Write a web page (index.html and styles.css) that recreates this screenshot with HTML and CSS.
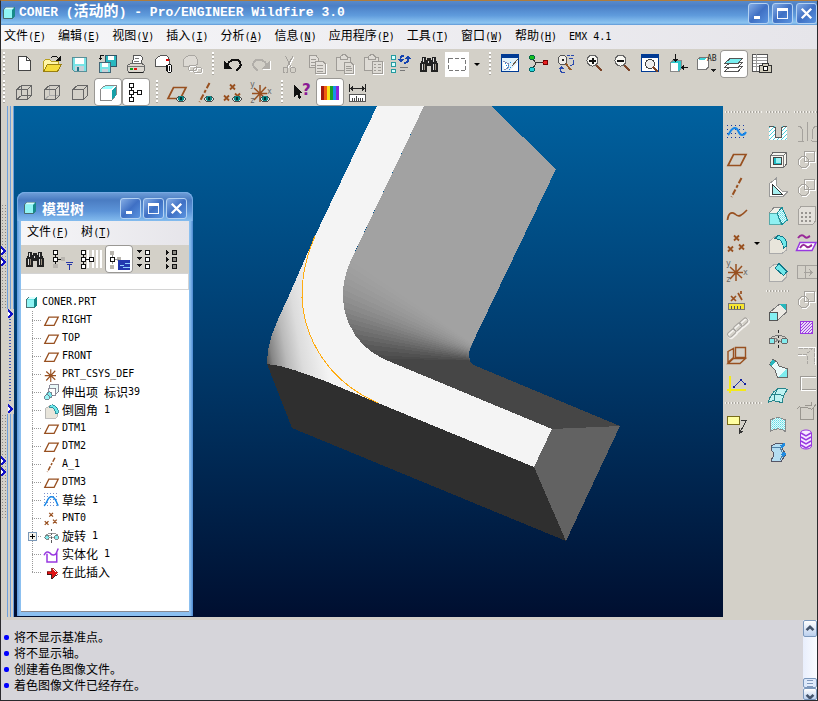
FILE: index.html
```html
<!DOCTYPE html>
<html lang="zh-CN">
<head>
<meta charset="utf-8">
<meta name="viewport" content="width=device-width, initial-scale=1">
<title>CONER (活动的) - Pro/ENGINEER Wildfire 3.0</title>
<link rel="stylesheet" href="styles.css">
</head>
<body>
<svg class="defs" aria-hidden="true">
<defs>
<pattern id="hatch" width="4" height="4" patternUnits="userSpaceOnUse"><rect width="4" height="4" fill="#fff"/><path d="M-1 1 1-1M0 4 4 0M3 5 5 3" stroke="#4fd0dc"/></pattern>
<pattern id="phatch" width="3" height="3" patternUnits="userSpaceOnUse"><rect width="3" height="3" fill="#e9dcf8"/><path d="M0 3 3 0" stroke="#a040e0"/></pattern>
<pattern id="dots" width="4" height="4" patternUnits="userSpaceOnUse"><rect width="1" height="1" fill="#1237a0"/></pattern>
<pattern id="tint" width="2" height="2" patternUnits="userSpaceOnUse"><rect width="2" height="2" fill="#e8f8fa"/><rect width="1" height="1" fill="#5cdce4"/><rect x="1" y="1" width="1" height="1" fill="#8ceaf0"/></pattern>
</defs>
<symbol id="part" viewBox="0 0 14 14"><path d="M1.500 3.500 4 1.500H12.500V10L10.500 12.500H1.500Z" fill="#66e6e6" stroke="#4a6a6c"/><path d="M2 4H10V12H2Z" fill="#8ff4f4"/><path d="M10 4 13 1V10L10 13Z" fill="#168a8a"/><path d="M2 3.500 4 1.500H12L10 3.500Z" fill="#d8ffff"/></symbol>
<symbol id="new" viewBox="0 0 28 28"><path d="M8.500 6.500H16.500L20.500 10.500V20.500H8.500Z" fill="#fff" stroke="#444"/><path d="M16.500 6.500V10.500H20.500" fill="none" stroke="#444"/></symbol>
<symbol id="open" viewBox="0 0 28 28"><path d="M5.500 21.500V11.500L7.500 9.500H11.500L13.500 11.500H20.500V14" fill="#fff6a8" stroke="#b8a020"/><path d="M5.500 21.500 9.500 14.500H23.500L19.500 21.500Z" fill="#f5dc3c" stroke="#9a8010"/><path d="M13 8C15 5.500 19 5.500 21 9" fill="none" stroke="#111"/><path d="M18 10.500H23V6Z" fill="#111"/></symbol>
<symbol id="save" viewBox="0 0 28 28"><path d="M6.500 7.500H20.500V21.500H8.500L6.500 19.500Z" fill="#78e4e6" stroke="#5a8f98"/><path d="M9 8H18V14H9Z" fill="#fff"/><path d="M9 16H18V21H9Z" fill="#c8d0d8"/><path d="M11 17H13V21H11Z" fill="#278"/></symbol>
<symbol id="savecopy" viewBox="0 0 28 28"><path d="M11.500 5.500H22.500V16.500H11.500Z" fill="#28b8c0" stroke="#356"/><path d="M14 6H20V10H14Z" fill="#fff"/><path d="M5.500 12.500H16.500V22.500H5.500Z" fill="#78e4e6" stroke="#467"/><path d="M8 13H14V17H8Z" fill="#fff"/><path d="M8 19H14V22H8Z" fill="#c8d0d8"/><path d="M10 5.500H6.500V9" fill="none" stroke="#111"/><path d="M4 7.500H9L6.500 10.500Z" fill="#111"/></symbol>
<symbol id="print" viewBox="0 0 28 28"><path d="M10 14 12 5.500H18.500L20.500 7.500 19 14Z" fill="#fff" stroke="#555"/><path d="M12.500 8.500H17M12 11.500H17" stroke="#777"/><path d="M5.500 15.500 8.500 13.500H20L22.500 15.500V20.500L21 22.500H7L5.500 20.500Z" fill="#dcd8d0" stroke="#666"/><path d="M6 16.500H22" stroke="#777"/><path d="M8 18H11V20H8Z" fill="#18a020"/><path d="M12 18H15V20H12Z" fill="#e01818"/><path d="M7 22.500H21" stroke="#222"/></symbol>
<symbol id="mail" viewBox="0 0 28 28"><path d="M5.500 16.500V11C6 7 9 6 12 5.500H15.500C18 6 19 8 19.500 10V16.500Z" fill="#fff" stroke="#555"/><path d="M16 9H19V11H16Z" fill="#d00"/><rect x="17.500" y="14.500" width="4" height="8" rx="2" fill="#fff" stroke="#111"/><path d="M19.500 16V21M16.500 15V21" stroke="#111"/></symbol>
<symbol id="maillink" viewBox="0 0 28 28"><path d="M5.500 16.500V11C6 7 9 6 12 5.500H15.500C18 6 19 8 19.500 10V14.500L12 16.500Z" fill="#dddad4" stroke="#aaa7a2"/><g fill="none" stroke="#fff"><rect x="11.500" y="16.500" width="8" height="5" rx="2"/><rect x="16.500" y="18.500" width="8" height="5" rx="2"/></g><g fill="none" stroke="#aaa7a2"><rect x="10.500" y="15.500" width="8" height="5" rx="2"/><rect x="15.500" y="17.500" width="8" height="5" rx="2"/></g></symbol>
<symbol id="undo" viewBox="0 0 28 28"><path d="M8 16C10 9 18 8 21 12C23 16 20 19 17 20.500" fill="none" stroke="#111" stroke-width="2"/><path d="M5 10V19H13Z" fill="#111"/></symbol>
<symbol id="redo" viewBox="0 0 28 28"><path d="M20 16C18 9 10 8 7 12C5 16 8 19 11 20.500" fill="none" stroke="#b1aea9" stroke-width="2"/><path d="M23 10V19H15Z" fill="#b1aea9"/><path d="M16 19.500H24M23.500 11V19" fill="none" stroke="#fff"/></symbol>
<symbol id="cut" viewBox="0 0 28 28"><g fill="none" stroke="#fff"><path d="M11 7 17 18M19 7 13 18"/></g><g fill="none" stroke="#a5a29d"><path d="M10.500 6 16 17M18 6 12 17"/><ellipse cx="10.500" cy="20" rx="2.500" ry="3"/><ellipse cx="18" cy="20" rx="2.500" ry="3"/></g></symbol>
<symbol id="copy" viewBox="0 0 28 28"><g fill="#e2dfda" stroke="#9f9c97"><path d="M6.500 5.500H13L15.500 8.500V17.500H6.500Z"/><path d="M12.500 11.500H20L22.500 14V23H12.500Z"/><path d="M8 9.500H13M8 12.500H12M8 15.500H12M14 15.500H20M14 18.500H20M14 21H20"/></g><path d="M23.500 14V24H13" fill="none" stroke="#fff"/></symbol>
<symbol id="paste" viewBox="0 0 28 28"><g fill="#dedbd5" stroke="#9f9c97"><path d="M5.500 7.500H19.500V20.500H5.500Z"/><path d="M9.500 9.500V6.500L12 4.500H14L16 6.500V9.500Z"/><path d="M13.500 12.500H20L22.500 15V23H13.500Z"/><path d="M15 16.500H20M15 18.500H21M15 20.500H21"/></g><path d="M23.500 15V24H14" fill="none" stroke="#fff"/></symbol>
<symbol id="pastesp" viewBox="0 0 28 28"><g fill="#dedbd5" stroke="#9f9c97"><path d="M5.500 7.500H19.500V20.500H5.500Z"/><path d="M9.500 9.500V6.500L12 4.500H14L16 6.500V9.500Z"/><path d="M13.500 11.500H23V23H13.500Z"/><path d="M15 14.500H17M19 14.500H22M15 17.500H17M19 17.500H22M15 20.500H17M19 20.500H22"/></g><path d="M24.500 12V24H14" fill="none" stroke="#fff"/></symbol>
<symbol id="regen" viewBox="0 0 28 28"><path d="M4.500 5.500H8.500V9.500H4.500ZM4.500 12.500H8.500V16.500H4.500ZM4.500 19.500H8.500V22.500H4.500Z" fill="#d5ffff" stroke="#269aa0"/><path d="M13 17.500H21M13 20.500H18" stroke="#777"/><path d="M13.500 10C13 7 15 5.500 17 5.500M21.500 8C22 11 20 13 17 13" fill="none" stroke="#1544b0" stroke-width="2"/><path d="M11 9H17L14 13ZM18 9H24L21 5Z" fill="#1544b0"/></symbol>
<symbol id="find" viewBox="0 0 28 28"><path d="M7 7H11V10H12V8H16V10H17V7H21V10L23 14V22H16V16H12V22H5V14L7 10Z" fill="#222"/><path d="M8 8H9V12H8ZM18 8H19V12H18ZM7 14H8V20H7ZM18 14H19V20H18ZM13 11H14V13H13Z" fill="#ddd"/><path d="M9 14H10V20H9ZM20 14H21V20H20Z" fill="#998f80"/></symbol>
<symbol id="select" viewBox="0 0 28 28"><path d="M2 2H26V27H2Z" fill="#fff"/><path d="M5.500 8.500H22.500V20.500H5.500Z" fill="none" stroke="#777" stroke-dasharray="4 2"/></symbol>
<symbol id="repaint" viewBox="0 0 28 28"><path d="M5.500 5.500H22.500V21.500H5.500Z" fill="#dff1fb" stroke="#003a94"/><path d="M5 4H23V8H5Z" fill="#003a94"/><path d="M22 12V21H13Z" fill="#fff"/><path d="M7 11 13 14 12 18 8 20" fill="#fff" stroke="#88a"/><path d="M16 16 22 9" stroke="#6a5a48"/><path d="M9 13H10V14H9ZM12 15H13V16H12ZM14 12H15V13H14ZM11 17H12V18H11ZM14 17H15V18H14ZM10 15H11V16H10ZM13 19H14V20H13Z" fill="#178ce0"/></symbol>
<symbol id="spin" viewBox="0 0 28 28"><path d="M8 8 12 13 8 20M12 12.500H22" fill="none" stroke="#333"/><circle cx="8" cy="7.500" r="2.500" fill="#16c020" stroke="#064"/><circle cx="8" cy="19.500" r="2.500" fill="#25d4dc" stroke="#066"/><circle cx="21.500" cy="12.500" r="2.500" fill="#e82020" stroke="#700"/></symbol>
<symbol id="orient" viewBox="0 0 28 28"><path d="M13 13 19 20" stroke="#955a28" stroke-width="2"/><circle cx="10.500" cy="10" r="4.500" fill="#efede8" stroke="#555"/><path d="M10 9H12V11H10Z" fill="#222"/><path d="M15 5.500H18M19 5.500H22M17 8.500H21M21.500 10C23 14 20 16 18 15M9 18C7 22 10 23 13 22" fill="none" stroke="#2748ae"/><path d="M7 19 9 16 12 19Z" fill="#2748ae"/></symbol>
<symbol id="zoomin" viewBox="0 0 28 28"><path d="M16 15 22 21" stroke="#7b4428" stroke-width="2"/><circle cx="12.500" cy="10.500" r="5.500" fill="#f8f7f2" stroke="#666"/><path d="M9 11H16M12.500 8V14" stroke="#111" stroke-width="2"/></symbol>
<symbol id="zoomout" viewBox="0 0 28 28"><path d="M16 15 22 21" stroke="#7b4428" stroke-width="2"/><circle cx="12.500" cy="10.500" r="5.500" fill="#f8f7f2" stroke="#666"/><path d="M9 11H16" stroke="#111" stroke-width="2"/></symbol>
<symbol id="refit" viewBox="0 0 28 28"><path d="M5.500 5.500H22.500V21.500H5.500Z" fill="#fff" stroke="#003a94"/><path d="M5 4H23V8H5Z" fill="#003a94"/><circle cx="14" cy="14" r="4.500" fill="#eee" stroke="#444"/><path d="M17 17 22 22" stroke="#7b4428" stroke-width="2"/></symbol>
<symbol id="reorient" viewBox="0 0 28 28"><path d="M6.500 12.500 9 10.500H17.500V18.500L15 21.500H6.500Z" fill="#2cc8cd" stroke="#888"/><path d="M7 13H14V21H7Z" fill="#fff"/><path d="M11.500 4V10M24 17.500H18" stroke="#111"/><path d="M9 9H14L11.500 12ZM20 15V20L17 17.500Z" fill="#111"/></symbol>
<symbol id="views" viewBox="0 0 28 28"><path d="M5.500 9.500 8 7.500H16.500V17L14 19.500H5.500Z" fill="#fff" stroke="#777"/><path d="M8 8H14L12 10H6Z" fill="#3cd4d8"/><path d="M19 19H24L21.500 22Z" fill="#222"/></symbol>
<symbol id="layers" viewBox="0 0 28 28"><g stroke="#555"><path d="M4.500 21.500 10 16.500H22.500L18 21.500Z" fill="#fff"/><path d="M4.500 17.500 10 12.500H22.500L18 17.500Z" fill="#fff"/><path d="M4.500 13.500 10 8.500H22.500L18 13.500Z" fill="#78eef0"/></g></symbol>
<symbol id="snap" viewBox="0 0 28 28"><path d="M4.500 4.500H19.500V21.500H4.500Z" fill="#fff" stroke="#555"/><path d="M5 7.500H19M5 10.500H19M5 13.500H19M5 16.500H19M8.500 4V21" stroke="#999"/><path d="M11.500 15.500H14L15 13.500H20L21 15.500H23.500V22.500H11.500Z" fill="#d0ccbb" stroke="#333"/><path d="M15.500 16.500H19.500V20.500H15.500Z" fill="#fff" stroke="#111"/></symbol>
<symbol id="wire" viewBox="0 0 28 28"><path d="M6.500 11.500H17.500V21.500H6.500ZM11.500 7.500H21.500V17.500H11.500ZM6.500 11.500 11.500 7.500M17.500 11.500 21.500 7.500M17.500 21.500 21.500 17.500M6.500 21.500 11.500 17.500" fill="none" stroke="#666"/></symbol>
<symbol id="hidden" viewBox="0 0 28 28"><path d="M11.500 7.500V17.500H21.500M11.500 17.500 6.500 21.500" fill="none" stroke="#aaa"/><path d="M6.500 11.500H17.500V21.500H6.500ZM6.500 11.500 11.500 7.500H21.500V17.500L17.500 21.500M17.500 11.500 21.500 7.500" fill="none" stroke="#666"/></symbol>
<symbol id="nohidden" viewBox="0 0 28 28"><path d="M6.500 11.500H17.500V21.500H6.500ZM6.500 11.500 11.500 7.500H21.500V17.500L17.500 21.500M17.500 11.500 21.500 7.500" fill="none" stroke="#666"/></symbol>
<symbol id="shade" viewBox="0 0 28 28"><path d="M6.500 11.500 11.500 7.500H22V17L17.500 22.500H6.500Z" fill="#fff" stroke="#888"/><path d="M7 11 12 8H21L17 11Z" fill="#9ff"/><path d="M18 12 22 8V17L18 22Z" fill="#18a0a8"/></symbol>
<symbol id="tree" viewBox="0 0 28 28"><path d="M9.500 6V20M10 14.500H18" stroke="#111"/><path d="M7.500 5.500H11.500V9.500H7.500ZM7.500 12.500H11.500V16.500H7.500ZM7.500 19.500H11.500V23.500H7.500ZM15.500 12.500H19.500V16.500H15.500Z" fill="#fff" stroke="#111"/></symbol>
<symbol id="eye" viewBox="0 0 28 28"><path d="M13 21C16 17 20 17 23 21C20 25 16 25 13 21Z" fill="#dfe8e6" stroke="#4a4a4a"/><circle cx="18" cy="20.500" r="3" fill="#0c8888"/><path d="M17 19H19V22H17Z" fill="#033"/></symbol>
<symbol id="plane" viewBox="0 0 28 28"><path class="smooth" d="M5 20.500 10.500 9.500H23L17.500 20.500Z" fill="none" stroke="#985020" stroke-width="1.700"/></symbol>
<symbol id="axis" viewBox="0 0 28 28"><path class="smooth" d="M18.500 5 8.500 24" stroke="#985020" stroke-width="2" stroke-dasharray="6 2 3 2"/></symbol>
<symbol id="points" viewBox="0 0 28 28"><path class="smooth" d="M11 6.500 16 11.500M16 6.500 11 11.500M5 17.500 10 22.500M10 17.500 5 22.500M16 15.500 21 20.500M21 15.500 16 20.500" stroke="#985020" stroke-width="1.800"/></symbol>
<symbol id="csys" viewBox="0 0 28 28"><path class="smooth" d="M13 7V24M5 15.500H20M7 10 19 21M19 9 7 22" stroke="#985020" stroke-width="1.500"/></symbol>
<symbol id="help" viewBox="0 0 28 28"><path d="M6 7V19L9 16 11 21 13 20 11.500 15H15Z" fill="#111"/></symbol>
<symbol id="colors" viewBox="0 0 28 28"><path d="M5 8H8V22H5Z" fill="#a01810"/><path d="M8 8H11V22H8Z" fill="#f05a10"/><path d="M11 8H14V22H11Z" fill="#f8e018"/><path d="M14 8H17V22H14Z" fill="#18a028"/><path d="M17 8H20V22H17Z" fill="#1890e8"/><path d="M20 8H23V22H20Z" fill="#8828d8"/></symbol>
<symbol id="measure" viewBox="0 0 28 28"><path d="M5.500 6V14M21.500 6V14M6 10.500H21" stroke="#222"/><path d="M6 10.500 9 8V13ZM21 10.500 18 8V13Z" fill="#222"/><path d="M5.500 16.500H21.500V23H5.500Z" fill="#fff" stroke="#555"/><path d="M8.500 20V23M10.500 20V23M12.500 18V23M14.500 20V23M16.500 20V23M18.500 20V23" stroke="#444"/></symbol>
<symbol id="sketch" viewBox="0 0 28 28"><path d="M4 5H24V24H4Z" fill="url(#dots)"/><path class="smooth" d="M5 18C7 16 8 11 12 11C16 11 15 18 19 18C21 18 22 17 23 15" fill="none" stroke="#1787e8" stroke-width="2"/></symbol>
<symbol id="sketcharc" viewBox="0 0 28 28"><path d="M4 4H24V24H4Z" fill="url(#dots)"/><path class="smooth" d="M4 21C8 19 8 9 14 9C20 9 20 17 23 21" fill="none" stroke="#1787e8" stroke-width="2"/></symbol>
<symbol id="curve" viewBox="0 0 28 28"><path class="smooth" d="M4.500 19C5 13 8 10 12 13C16 17 19 14 24 9" fill="none" stroke="#985020" stroke-width="1.700"/></symbol>
<symbol id="refpt" viewBox="0 0 28 28"><path class="smooth" d="M8 11 13 16M13 11 8 16M15 8 19 15M18 6V9" stroke="#985020" stroke-width="1.700"/><path d="M5.500 18.500H21.500V24.500H5.500Z" fill="#f6e430" stroke="#777"/><path d="M8.500 21V24M11.500 21V24M14.500 21V24M17.500 21V24" stroke="#555"/></symbol>
<symbol id="chain" viewBox="0 0 28 28"><g class="smooth" fill="none" stroke="#f4f2ee" stroke-width="2" transform="translate(1 1)"><rect x="4" y="18" width="9" height="5" rx="2" transform="rotate(-42 8 20)"/><rect x="10" y="12" width="9" height="5" rx="2" transform="rotate(-42 14 14)"/><rect x="16" y="7" width="9" height="5" rx="2" transform="rotate(-42 20 9)"/></g><g class="smooth" fill="none" stroke="#a5a29d"><rect x="4" y="18" width="9" height="5" rx="2" transform="rotate(-42 8 20)"/><rect x="10" y="12" width="9" height="5" rx="2" transform="rotate(-42 14 14)"/><rect x="16" y="7" width="9" height="5" rx="2" transform="rotate(-42 20 9)"/></g></symbol>
<symbol id="planes" viewBox="0 0 28 28"><path class="smooth" d="M12.500 6.500H22.500V16.500H12.500ZM5 10.500 10.500 7.500V16.500L5 21.500ZM5 22.500 10.500 17.500H22.500L17 22.500Z" fill="none" stroke="#985020" stroke-width="1.400"/></symbol>
<symbol id="graph" viewBox="0 0 28 28"><path d="M7 7V24M4 21H23" stroke="#f4ea18" stroke-width="2"/><path d="M11 18 18 11 22 15" fill="none" stroke="#2030a8"/><path d="M10 17H12V19H10ZM17 10H19V12H17ZM21 14H23V16H21Z" fill="#1020a0"/></symbol>
<symbol id="note" viewBox="0 0 28 28"><path d="M4.500 6.500H16.500V14.500H4.500Z" fill="#ffffa0" stroke="#776b18"/><path d="M18 10.500H23.500L17 22M16.500 18V23.500L20 21" fill="none" stroke="#333"/></symbol>
<symbol id="hole" viewBox="0 0 28 28"><path d="M5 9H23V23H5Z" fill="url(#hatch)"/><path d="M11 9H18V20H11Z" fill="#d2cec6"/><path d="M5 9.500H9L11.500 11V20.500H17.500V11L20 9.500H23" fill="none" stroke="#555"/></symbol>
<symbol id="shell" viewBox="0 0 28 28"><path d="M6.500 10.500 9 7.500H22.500V19L19.500 22.500H6.500Z" fill="#f6f5ef" stroke="#666"/><path d="M6.500 10.500H19.500V22.500M19.500 10.500 22.500 7.500" fill="none" stroke="#777"/><path d="M9.500 12.500H17.500V19.500H9.500Z" fill="#20bcc4" stroke="#444"/><path d="M12 13H17V18H12Z" fill="#9af3f4"/></symbol>
<symbol id="rib" viewBox="0 0 28 28"><path d="M5.500 10.500 12 5.500V12L18 18 23.500 19 19 23.500H5.500Z" fill="#fff" stroke="#999"/><path d="M8 11V21.500H18.500Z" fill="#a6f0f0" stroke="#333"/></symbol>
<symbol id="draft" viewBox="0 0 28 28"><path d="M5.500 11.500 10 6.500H18L23.500 19 18 23.500H5.500Z" fill="#f1f0e9" stroke="#888"/><path d="M5.500 12.500H13L17 23.500H5.500Z" fill="#8ff0f2" stroke="#5aa"/><path d="M13 12 18 6.500 23.500 19 18 23.500Z" fill="url(#tint)" stroke="#188e98"/></symbol>
<symbol id="round" viewBox="0 0 28 28"><path d="M5.500 12 11 7.500C18 6 22 10 22.500 17V21L18 24.500H5.500Z" fill="#e8e5db" stroke="#aaa"/><path d="M11 9.500 14 6.500C20 7 23 11 23 17L19.500 19C19 13 17 10 11 9.500Z" fill="#70e8ea" stroke="#178"/></symbol>
<symbol id="chamfer" viewBox="0 0 28 28"><path d="M5.500 11 10 7.500H15L22.500 14V20L18 24.500H5.500Z" fill="#e8e5db" stroke="#aaa"/><path d="M11 11 15 6.500 23 14.500 19.500 18.500Z" fill="#70e8ea" stroke="#178"/></symbol>
<symbol id="extrude" viewBox="0 0 28 28"><path d="M5.500 14.500 15 6.500H22.500V14L13.500 22.500Z" fill="#eceae4" stroke="#777"/><path d="M15 6H22V13Z" fill="#27b7bd"/><path d="M5.500 14.500H13.500V22.500H5.500Z" fill="#84f0f2" stroke="#555"/></symbol>
<symbol id="protrude" viewBox="0 0 28 28"><g stroke="#667"><path d="M11.500 3.500H23.500V13L20 15.500H11.500Z" fill="#e8f8f8"/><path d="M10.500 8.500H19.500V17.500H10.500Z" fill="#fff"/><circle cx="11" cy="17" r="4" fill="#7cecee"/><circle cx="8" cy="20.500" r="3.500" fill="#9af4f4"/></g></symbol>
<symbol id="revolve" viewBox="0 0 28 28"><path d="M14.500 4V24" stroke="#222" stroke-dasharray="3 2"/><path d="M7 12C9 9 20 9 22 12" fill="none" stroke="#777"/><circle cx="8" cy="15" r="3" fill="#84ebed" stroke="#666"/><circle cx="20.500" cy="15" r="3" fill="#84ebed" stroke="#666"/><path d="M11 12 17 16M11 16 14 14" stroke="#888"/></symbol>
<symbol id="blend" viewBox="0 0 28 28"><path d="M5.500 10.500 9 5.500 13 8 15 12 23.500 15V23.500H13.500L11 16Z" fill="#e9fafa" stroke="#666"/><path d="M5.500 10 9 5.500 11 8 8 12Z" fill="#27b7bd"/><path d="M14 23 23 15V23Z" fill="#7eecee"/></symbol>
<symbol id="patch" viewBox="0 0 28 28"><path d="M4.500 20C6 13 9 10 13 7C17 5 20 6 23.500 7.500C20 11 19 15 18 21C14 19 9 18 4.500 20Z" fill="#c0f3f2" stroke="#26838a"/><path d="M8 13C12 11 17 13 20 14M14 6.500C10 12 10 15 10 18" fill="none" stroke="#26838a"/></symbol>
<symbol id="bound" viewBox="0 0 28 28"><path d="M6.500 10C11 7 17 7 21.500 10V21.500C17 18 11 18 6.500 21.500Z" fill="url(#tint)" stroke="#888"/></symbol>
<symbol id="style" viewBox="0 0 28 28"><path d="M7.500 8 12 5.500H20.500L18 8.500C17 13 22 13 21.500 17L17 23.500H7.500C6 20 11 19 10 15C7 13 7 11 7.500 8Z" fill="#b4ddf2" stroke="#556"/><path d="M8 9H17C16 13 19 14 19 17L16 22" fill="none" stroke="#4e7fa4"/><path d="M17 9 21 6M18 18 21 15" stroke="#208be0" stroke-width="3"/></symbol>
<symbol id="mirror" viewBox="0 0 28 28"><g fill="none" stroke="#a5a29d"><path d="M15.500 5V24M5.500 9C11 9 11 14 11 24H5.500M25.500 9C20 9 20 14 20 24H26"/></g></symbol>
<symbol id="merge" viewBox="0 0 28 28"><g fill="none" stroke="#fff" transform="translate(1 1)"><path d="M12.500 6.500H22.500V16.500H12.500Z"/><circle cx="11.500" cy="17" r="5.500"/></g><g fill="none" stroke="#a5a29d"><path d="M12.500 6.500H22.500V16.500H12.500Z"/><circle cx="11.500" cy="17" r="5.500"/></g></symbol>
<symbol id="pattern" viewBox="0 0 28 28"><path d="M6.500 8.500 9 5.500H23.500V20L20.500 23.500H6.500Z" fill="#e3e0da" stroke="#a5a29d"/><path d="M9 11H11V13H9ZM13 11H15V13H13ZM17 11H19V13H17ZM9 15H11V17H9ZM13 15H15V17H13ZM17 15H19V17H17ZM9 19H11V21H9ZM13 19H15V21H13ZM17 19H19V21H17Z" fill="#979490"/></symbol>
<symbol id="project" viewBox="0 0 28 28"><path class="smooth" d="M6 9C9 5 11 6 13 8C15 10 16 8 18 7" fill="none" stroke="#982898" stroke-width="2"/><path class="smooth" d="M4.500 21.500 8 13.500H24L20 21.500Z" fill="#fff" stroke="#9838e0" stroke-width="1.500"/><path class="smooth" d="M8 19C11 14 13 16 15 18C17 19 18 17 20 16" fill="none" stroke="#982898" stroke-width="2"/></symbol>
<symbol id="extend" viewBox="0 0 28 28"><path d="M5.500 8.500H13.500V21.500H5.500ZM13.500 8.500H25M13.500 21.500H25M12 15.500H20M17 12 20 15.500 17 19" fill="none" stroke="#a5a29d"/></symbol>
<symbol id="fill" viewBox="0 0 28 28"><path d="M8.500 8.500H20.500V20.500H8.500Z" fill="url(#phatch)" stroke="#9838e0"/></symbol>
<symbol id="trim" viewBox="0 0 28 28"><path d="M6 6.500H23.500V24M6 14.500H14" fill="none" stroke="#fff"/><path d="M7 7.500H22.500V23M6 13.500H14L20 8M15.500 15V23" fill="none" stroke="#aaa7a2" stroke-dasharray="4 1"/></symbol>
<symbol id="offset" viewBox="0 0 28 28"><path d="M24 7.500H8.500V20.500H24" fill="none" stroke="#9d9a95"/><path d="M24 8.500H9.500V21.500H24" fill="none" stroke="#fff"/></symbol>
<symbol id="solid" viewBox="0 0 28 28"><path d="M8.500 11V22.500H21.500V11C19 15 17 8 8.500 11ZM5 12 8 9M13 8H19V5M22 10 24 7" fill="none" stroke="#99968f"/></symbol>
<symbol id="solidp" viewBox="0 0 28 28"><path class="smooth" d="M8 13V24H21V12C18 16 14 15 12 12C8 9 6 11 4 15M20 13 23 6" fill="#fff" stroke="#9838e0" stroke-width="2"/></symbol>
<symbol id="thread" viewBox="0 0 28 28"><path class="smooth" d="M8.500 8C8.500 4 19.500 4 19.500 8V21C19.500 25 8.500 25 8.500 21Z" fill="#f7eaff" stroke="#9838e0"/><path class="smooth" d="M9 8 14 11 19 8M9 12 14 15 19 12M9 16 14 19 19 16M9 20 14 23 19 20" fill="none" stroke="#9838e0" stroke-width="1.500"/></symbol>
<symbol id="insert" viewBox="0 0 28 28"><path d="M8 13H14V8L22 15 14 22V17H8Z" fill="#e01414" stroke="#700"/><path d="M8 17H14V22L21 16" fill="none" stroke="#222"/></symbol>
<symbol id="tfilter" viewBox="0 0 28 28"><path d="M6.500 8V22M7 14.500H14" stroke="#111"/><path d="M4.500 5.500H8.500V9.500H4.500ZM4.500 12.500H8.500V16.500H4.500Z" fill="#fff" stroke="#111"/><path d="M4 19H9V23H4ZM12 12H16V16H12Z" fill="#b8b5af"/><path d="M17 17.500H24M18 19.500H23M20.500 20V25" stroke="#2536a8"/></symbol>
<symbol id="tcols" viewBox="0 0 28 28"><path d="M11 5V23M16 5V23M20 5V23M24 5V23" stroke="#fff" stroke-width="2"/><path d="M6.500 9V20M7 14.500H14" stroke="#111"/><path d="M4.500 5.500H8.500V9.500H4.500ZM4.500 12.500H8.500V16.500H4.500ZM4.500 19.500H8.500V23.500H4.500ZM12.500 12.500H16.500V16.500H12.500Z" fill="#fff" stroke="#111"/></symbol>
<symbol id="tsel" viewBox="0 0 28 28"><path d="M5 6H9V10H5ZM5 20H9V24H5ZM12 12H16V16H12Z" fill="#b8b5af"/><path d="M7.500 10V19M9 14.500H14" stroke="#999"/><path d="M5.500 12.500H9.500V16.500H5.500Z" fill="#fff" stroke="#111"/><path d="M13 15H25V25H13Z" fill="#2338b0"/><path d="M20 18.500H25M15 20.500H19M18 22.500H25" stroke="#8fd0ff"/></symbol>
<symbol id="texp" viewBox="0 0 28 28"><path d="M12.500 5.500H16.500V9.500H12.500ZM12.500 12.500H16.500V16.500H12.500ZM12.500 19.500H16.500V23.500H12.500Z" fill="#fff" stroke="#111"/><path d="M4 5H9L6.500 8ZM4 12H9L6.500 15ZM4 19H9L6.500 22Z" fill="#111"/></symbol>
<symbol id="tcol" viewBox="0 0 28 28"><path d="M11.500 5.500H15.500V9.500H11.500ZM11.500 12.500H15.500V16.500H11.500ZM11.500 19.500H15.500V23.500H11.500Z" fill="#8b8982" stroke="#111"/><path d="M5 5 8 7.500 5 10ZM5 12 8 14.500 5 17ZM5 19 8 21.500 5 24Z" fill="#111"/></symbol>
<symbol id="min" viewBox="0 0 20 20"><path d="M5 13H12V16H5Z" fill="#fff"/></symbol>
<symbol id="max" viewBox="0 0 20 20"><path d="M4.500 5.500H15.500V15.500H4.500Z" fill="none" stroke="#fff"/><path d="M4 4H16V7H4Z" fill="#fff"/></symbol>
<symbol id="close" viewBox="0 0 20 20"><path class="smooth" d="M5 5 15 15M15 5 5 15" stroke="#fff" stroke-width="2.500"/></symbol>
<symbol id="chev" viewBox="0 0 5 10"><path d="M0 1 4 5 0 9" fill="#fff" stroke="#1212c8" stroke-width="2"/></symbol>
</svg>

<div class="app">
  <header class="titlebar">
    <svg class="titleicon" aria-hidden="true"><use href="#part"/></svg>
    <h1>CONER (<span class="cj">活动的</span>) - Pro/ENGINEER Wildfire 3.0</h1>
    <button class="wbtn" aria-label="最小化"><svg><use href="#min"/></svg></button>
    <button class="wbtn" aria-label="最大化"><svg><use href="#max"/></svg></button>
    <button class="wbtn" aria-label="关闭"><svg><use href="#close"/></svg></button>
  </header>
  <nav class="menubar" aria-label="主菜单">
    <button>文件<span>(<u>F</u>)</span></button><button>编辑<span>(<u>E</u>)</span></button><button>视图<span>(<u>V</u>)</span></button><button>插入<span>(<u>I</u>)</span></button><button>分析<span>(<u>A</u>)</span></button><button>信息<span>(<u>N</u>)</span></button><button>应用程序<span>(<u>P</u>)</span></button><button>工具<span>(<u>T</u>)</span></button><button>窗口<span>(<u>W</u>)</span></button><button>帮助<span>(<u>H</u>)</span></button><button><span>EMX 4.1</span></button>
  </nav>
  <div class="toolbars">
    <div class="toolbar">
      <i class="grip"></i>
      <button class="tb" aria-label="新建"><svg><use href="#new"/></svg></button>
      <button class="tb" aria-label="打开"><svg><use href="#open"/></svg></button>
      <button class="tb" aria-label="保存"><svg><use href="#save"/></svg></button>
      <button class="tb" aria-label="保存副本"><svg><use href="#savecopy"/></svg></button>
      <button class="tb" aria-label="打印"><svg><use href="#print"/></svg></button>
      <button class="tb" aria-label="发送附件"><svg><use href="#mail"/></svg></button>
      <button class="tb" aria-label="发送链接"><svg><use href="#maillink"/></svg></button>
      <i class="sep"></i>
      <button class="tb" aria-label="撤消"><svg><use href="#undo"/></svg></button>
      <button class="tb" aria-label="重做"><svg><use href="#redo"/></svg></button>
      <button class="tb" aria-label="剪切"><svg><use href="#cut"/></svg></button>
      <button class="tb" aria-label="复制"><svg><use href="#copy"/></svg></button>
      <button class="tb" aria-label="粘贴"><svg><use href="#paste"/></svg></button>
      <button class="tb" aria-label="选择性粘贴"><svg><use href="#pastesp"/></svg></button>
      <button class="tb" aria-label="再生"><svg><use href="#regen"/></svg></button>
      <button class="tb" aria-label="查找"><svg><use href="#find"/></svg></button>
      <button class="tb" aria-label="选取"><svg><use href="#select"/></svg></button>
      <button class="drop" aria-label="选取选项"></button>
      <i class="sep"></i>
      <button class="tb" aria-label="重画"><svg><use href="#repaint"/></svg></button>
      <button class="tb" aria-label="旋转中心"><svg><use href="#spin"/></svg></button>
      <button class="tb" aria-label="定向模式"><svg><use href="#orient"/></svg></button>
      <button class="tb" aria-label="放大"><svg><use href="#zoomin"/></svg></button>
      <button class="tb" aria-label="缩小"><svg><use href="#zoomout"/></svg></button>
      <button class="tb" aria-label="重新调整"><svg><use href="#refit"/></svg></button>
      <button class="tb" aria-label="重定向"><svg><use href="#reorient"/></svg></button>
      <button class="tb" aria-label="视图列表"><svg viewBox="0 0 28 28"><use href="#views"/><text class="glyph" x="15" y="11">AB</text></svg></button>
      <button class="tb on" aria-label="层"><svg><use href="#layers"/></svg></button>
      <button class="tb" aria-label="视图管理器"><svg><use href="#snap"/></svg></button>
    </div>
    <div class="toolbar">
      <i class="grip"></i>
      <button class="tb" aria-label="线框"><svg><use href="#wire"/></svg></button>
      <button class="tb" aria-label="隐藏线"><svg><use href="#hidden"/></svg></button>
      <button class="tb" aria-label="无隐藏线"><svg><use href="#nohidden"/></svg></button>
      <button class="tb on" aria-label="着色"><svg><use href="#shade"/></svg></button>
      <button class="tb on" aria-label="模型树"><svg><use href="#tree"/></svg></button>
      <i class="sep"></i>
      <button class="tb" aria-label="基准平面显示"><svg><use href="#plane"/><use href="#eye"/></svg></button>
      <button class="tb" aria-label="基准轴显示"><svg><use href="#axis"/><use href="#eye"/></svg></button>
      <button class="tb" aria-label="基准点显示"><svg><use href="#points"/><use href="#eye"/></svg></button>
      <button class="tb" aria-label="坐标系显示"><svg viewBox="0 0 28 28"><use href="#csys"/><use href="#eye"/><text class="glyph dim" x="3" y="9">y</text><text class="glyph dim" x="20" y="16">x</text><text class="glyph dim" x="3" y="25">z</text></svg></button>
      <i class="sep"></i>
      <button class="tb" aria-label="上下文帮助"><svg viewBox="0 0 28 28"><use href="#help"/><text class="glyph query" x="14" y="17">?</text></svg></button>
      <button class="tb on" aria-label="外观"><svg><use href="#colors"/></svg></button>
      <button class="tb" aria-label="测量"><svg><use href="#measure"/></svg></button>
    </div>
  </div>

  <main class="main">
    <div class="sash" aria-hidden="true">
      <div class="outer">
        <div class="handle"><svg><use href="#chev"/></svg><svg><use href="#chev"/></svg></div>
        <div class="handle"><svg><use href="#chev"/></svg><svg><use href="#chev"/></svg></div>
      </div>
      <div class="inner">
        <div class="rails"></div>
        <div class="pull"><svg><use href="#chev"/></svg><svg><use href="#chev"/></svg></div>
        <div class="rails"></div>
      </div>
    </div>

    <section class="view" aria-label="图形窗口">
      <svg class="model" viewBox="14 106 709 511" preserveAspectRatio="xMidYMin meet" role="img" aria-label="CONER.PRT">
        <defs>
          <linearGradient id="fillet" gradientUnits="userSpaceOnUse" x1="265" y1="360" x2="325" y2="350">
            <stop offset="0" stop-color="#4a4a4a"/><stop offset=".12" stop-color="#858585"/><stop offset=".35" stop-color="#bababa"/><stop offset=".6" stop-color="#dcdcdc"/><stop offset="1" stop-color="#f4f4f4"/>
          </linearGradient>
          <clipPath id="wall"><path d="M424 106H491L556 169 470 348Q467 355 470 361L386 362 330 330 330 263Z"/></clipPath>
        </defs>
        <path d="M424 106H491L556 169 470 348Q467 355 470 362L386 362 345 330 345 273Z" fill="#a2a2a2"/>
        <g clip-path="url(#wall)">
          <path d="M500 362 340 253V375H500Z" fill="#a1a1a1"/>
          <path d="M500 362 340 260V375H500Z" fill="#9f9f9f"/>
          <path d="M500 362 340 267V375H500Z" fill="#9d9d9d"/>
          <path d="M500 362 340 274V375H500Z" fill="#9a9a9a"/>
          <path d="M500 362 340 281V375H500Z" fill="#979797"/>
          <path d="M500 362 340 288V375H500Z" fill="#939393"/>
          <path d="M500 362 340 294V375H500Z" fill="#8f8f8f"/>
          <path d="M500 362 340 300V375H500Z" fill="#8a8a8a"/>
          <path d="M500 362 340 306V375H500Z" fill="#858585"/>
          <path d="M500 362 340 311V375H500Z" fill="#7f7f7f"/>
          <path d="M500 362 340 316V375H500Z" fill="#797979"/>
          <path d="M500 362 340 321V375H500Z" fill="#737373"/>
          <path d="M500 362 340 326V375H500Z" fill="#6d6d6d"/>
          <path d="M500 362 340 331V375H500Z" fill="#666"/>
          <path d="M500 362 340 336V375H500Z" fill="#5f5f5f"/>
          <path d="M500 362 340 341V375H500Z" fill="#585858"/>
          <path d="M500 362 340 347V375H500Z" fill="#515151"/>
          <path d="M500 362 340 353V375H500Z" fill="#4b4b4b"/>
          <path d="M500 362 340 359V375H500Z" fill="#464646"/>
        </g>
        <path d="M380 359 468 360Q471 364 476 366L620 426 552 430Z" fill="#464646"/>
        <path d="M377 106H424L351 260Q336 293 349 324C357 342 370 353 386 360L552 429 534 467 378 403C325 380 304 335 302 298C302 274 306 258 315 236Z" fill="#f4f4f4"/>
        <path d="M315 236C306 258 302 274 302 298C304 335 325 380 378 403L320 382C301 374 284 365 267 365C266 348 273 328 287 300Z" fill="url(#fillet)"/>
        <path d="M267 364C284 365 305 374 325 381L378 403 534 467 566 541 292 428Z" fill="#2f2f2f"/>
        <path d="M552 429 620 426 566 541 534 467Z" fill="#626262"/>
        <path d="M315 236C306 258 302 274 302 298C304 335 325 380 378 403" fill="none" stroke="#ffac10"/>
      </svg>

      <aside class="tree-window">
        <header class="tree-title">
          <svg class="titleicon" aria-hidden="true"><use href="#part"/></svg>
          <h2>模型树</h2>
          <button class="wbtn" aria-label="最小化"><svg><use href="#min"/></svg></button>
          <button class="wbtn" aria-label="最大化"><svg><use href="#max"/></svg></button>
          <button class="wbtn" aria-label="关闭"><svg><use href="#close"/></svg></button>
        </header>
        <div class="tree-body">
          <nav class="menubar" aria-label="模型树菜单"><button>文件<span>(<u>F</u>)</span></button><button>树<span>(<u>T</u>)</span></button></nav>
          <div class="tree-tools">
            <button class="tb" aria-label="查找"><svg><use href="#find"/></svg></button>
            <button class="tb" aria-label="树过滤器"><svg><use href="#tfilter"/></svg></button>
            <button class="tb" aria-label="树列"><svg><use href="#tcols"/></svg></button>
            <button class="tb on" aria-label="加亮几何"><svg><use href="#tsel"/></svg></button>
            <button class="tb" aria-label="全部展开"><svg><use href="#texp"/></svg></button>
            <button class="tb" aria-label="全部收缩"><svg><use href="#tcol"/></svg></button>
          </div>
          <input class="filter" type="text" aria-label="模型树搜索">
          <div class="root"><svg aria-hidden="true"><use href="#part"/></svg><span>CONER.PRT</span></div>
          <ul class="nodes">
            <li><svg><use href="#plane"/></svg><span>RIGHT</span></li>
            <li><svg><use href="#plane"/></svg><span>TOP</span></li>
            <li><svg><use href="#plane"/></svg><span>FRONT</span></li>
            <li><svg><use href="#csys"/></svg><span>PRT_CSYS_DEF</span></li>
            <li><svg><use href="#protrude"/></svg>伸出项<span> </span>标识<span>39</span></li>
            <li><svg><use href="#round"/></svg>倒圆角<span> 1</span></li>
            <li><svg><use href="#plane"/></svg><span>DTM1</span></li>
            <li><svg><use href="#plane"/></svg><span>DTM2</span></li>
            <li><svg><use href="#axis"/></svg><span>A_1</span></li>
            <li><svg><use href="#plane"/></svg><span>DTM3</span></li>
            <li><svg><use href="#sketcharc"/></svg>草绘<span> 1</span></li>
            <li><svg><use href="#points"/></svg><span>PNT0</span></li>
            <li><button class="expand" aria-label="展开"></button><svg><use href="#revolve"/></svg>旋转<span> 1</span></li>
            <li><svg><use href="#solidp"/></svg>实体化<span> 1</span></li>
            <li><svg><use href="#insert"/></svg>在此插入</li>
          </ul>
        </div>
      </aside>
    </section>

    <div class="features">
      <div class="fcol">
        <i class="hgrip"></i>
        <button class="tb" aria-label="草绘"><svg><use href="#sketch"/></svg></button>
        <button class="tb" aria-label="基准平面"><svg><use href="#plane"/></svg></button>
        <button class="tb" aria-label="基准轴"><svg><use href="#axis"/></svg></button>
        <button class="tb" aria-label="基准曲线"><svg><use href="#curve"/></svg></button>
        <div class="pair"><button class="tb" aria-label="基准点"><svg><use href="#points"/></svg></button><button class="drop" aria-label="基准点选项"></button></div>
        <button class="tb" aria-label="坐标系"><svg viewBox="0 0 28 28"><use href="#csys"/><text class="glyph dim" x="3" y="9">y</text><text class="glyph dim" x="20" y="18">x</text><text class="glyph dim" x="3" y="25">z</text></svg></button>
        <button class="tb" aria-label="分析"><svg><use href="#refpt"/></svg></button>
        <button class="tb" aria-label="参照"><svg><use href="#chain"/></svg></button>
        <button class="tb" aria-label="目的几何"><svg><use href="#planes"/></svg></button>
        <button class="tb" aria-label="基准图形"><svg><use href="#graph"/></svg></button>
        <i class="hgrip"></i>
        <button class="tb" aria-label="注释"><svg><use href="#note"/></svg></button>
      </div>
      <div class="fcol">
        <i class="hgrip"></i>
        <button class="tb" aria-label="孔"><svg><use href="#hole"/></svg></button>
        <button class="tb" aria-label="壳"><svg><use href="#shell"/></svg></button>
        <button class="tb" aria-label="筋"><svg><use href="#rib"/></svg></button>
        <button class="tb" aria-label="拔模"><svg><use href="#draft"/></svg></button>
        <button class="tb" aria-label="倒圆角"><svg><use href="#round"/></svg></button>
        <button class="tb" aria-label="倒角"><svg><use href="#chamfer"/></svg></button>
        <i class="hgrip"></i>
        <button class="tb" aria-label="拉伸"><svg><use href="#extrude"/></svg></button>
        <button class="tb" aria-label="旋转"><svg><use href="#revolve"/></svg></button>
        <button class="tb" aria-label="可变剖面扫描"><svg><use href="#blend"/></svg></button>
        <button class="tb" aria-label="边界混合"><svg><use href="#patch"/></svg></button>
        <button class="tb" aria-label="曲面"><svg><use href="#bound"/></svg></button>
        <button class="tb" aria-label="造型"><svg><use href="#style"/></svg></button>
      </div>
      <div class="fcol">
        <i class="hgrip"></i>
        <button class="tb" aria-label="镜像"><svg><use href="#mirror"/></svg></button>
        <button class="tb" aria-label="合并"><svg><use href="#merge"/></svg></button>
        <button class="tb" aria-label="相交"><svg><use href="#merge"/></svg></button>
        <button class="tb" aria-label="阵列"><svg><use href="#pattern"/></svg></button>
        <button class="tb" aria-label="投影"><svg><use href="#project"/></svg></button>
        <button class="tb" aria-label="延伸"><svg><use href="#extend"/></svg></button>
        <button class="tb" aria-label="求交"><svg><use href="#merge"/></svg></button>
        <button class="tb" aria-label="填充"><svg><use href="#fill"/></svg></button>
        <button class="tb" aria-label="修剪"><svg><use href="#trim"/></svg></button>
        <button class="tb" aria-label="偏移"><svg><use href="#offset"/></svg></button>
        <button class="tb" aria-label="实体化"><svg><use href="#solid"/></svg></button>
        <button class="tb" aria-label="螺旋"><svg><use href="#thread"/></svg></button>
      </div>
    </div>
  </main>

  <footer class="messages">
    <ul>
      <li>将不显示基准点。</li>
      <li>将不显示轴。</li>
      <li>创建着色图像文件。</li>
      <li>着色图像文件已经存在。</li>
    </ul>
    <div class="scroll">
      <button aria-label="向上滚动"><svg viewBox="0 0 14 16"><path d="M3 10 7 6 11 10" fill="none" stroke="#44546c" stroke-width="3"/></svg></button>
      <div class="track"></div>
      <div class="thumb"></div>
      <button class="down" aria-label="向下滚动"><svg viewBox="0 0 14 16"><path d="M3 6 7 10 11 6" fill="none" stroke="#44546c" stroke-width="3"/></svg></button>
    </div>
  </footer>
</div>
</body>
</html>
```
FILE: styles.css
```css
:root {
  --face: #d3d0c8;
  --cjk: "Noto Sans CJK SC", sans-serif;
  --latin: "DejaVu Sans Mono", "Noto Sans CJK SC", monospace;
}

* { box-sizing: border-box; }

body {
  margin: 0;
  font: 12px/16px var(--cjk);
  color: #000;
}

button {
  margin: 0;
  padding: 0;
  border: 0;
  background: none;
  font: inherit;
  color: inherit;
}

ul { margin: 0; padding: 0; list-style: none; }
svg { display: block; }
.defs { position: absolute; width: 0; height: 0; }
.smooth { shape-rendering: geometricPrecision; }

.app {
  display: flex;
  flex-direction: column;
  height: 100vh;
  min-height: 600px;
  overflow: hidden;
  background: var(--face);
  border: 1px solid #2a2a2e;
  border-top-color: #b07c3c;
}

/* Title bars */
.titlebar {
  display: flex;
  align-items: center;
  gap: 3px;
  height: 24px;
  flex: none;
  padding-left: 1px;
  background: linear-gradient(#5a8ac8, #4b7fc6 20%, #5f9bdc 60%, #8cc4f0 92%, #5c96d6);
}
.titleicon { width: 14px; height: 14px; flex: none; }
.titlebar h1 {
  flex: 1;
  margin: 0;
  font: bold 13px/20px "Liberation Mono", "Noto Sans CJK SC", monospace;
  color: #fff;
  white-space: nowrap;
}
.titlebar .cj { font-size: 15px; }

.wbtn {
  width: 21px;
  height: 21px;
  flex: none;
  border: 1px solid #b4d2f2;
  border-radius: 3px;
  background: linear-gradient(135deg, #84ace4, #3f70c4 50%, #5a94e0);
}
.wbtn svg { width: 19px; height: 19px; shape-rendering: crispEdges; }

/* Menus */
.menubar {
  display: flex;
  align-items: center;
  gap: 12px;
  height: 24px;
  flex: none;
  padding: 0 0 3px 3px;
  background: linear-gradient(90deg, #f6f6f8, #e6e5ea);
}
.menubar button { white-space: nowrap; }
.menubar span, .root span, .nodes span {
  font-family: var(--latin);
  font-size: 10px;
  white-space: pre;
}

/* Toolbars */
.toolbars { flex: none; padding-top: 1px; }
.toolbar { display: flex; }
.grip { width: 9px; flex: none; }
.grip, .sep {
  background: repeating-linear-gradient(#fff 0 2px, #aaa7a0 2px 3px, transparent 3px 4px) 2px 2px / 2px 24px no-repeat;
}
.sep { width: 13px; flex: none; background-position: 6px 2px; }

.tb { width: 28px; height: 28px; flex: none; }
.tb svg { width: 28px; height: 28px; shape-rendering: crispEdges; }
.tb.on {
  background: #fff;
  border-radius: 4px;
  box-shadow: inset 0 0 0 1px #9a9894;
}
.glyph { font: 8px var(--latin); fill: #222; }
.glyph.dim { fill: #666; }
.glyph.query { font: bold 15px "DejaVu Sans", sans-serif; fill: #8a1a94; }
.drop {
  width: 12px;
  height: 28px;
  flex: none;
}
.drop::before {
  content: "";
  display: block;
  width: 0;
  margin: 0 auto;
  border: 3px solid transparent;
  border-top-color: #000;
  border-bottom: 0;
}

/* Working area */
.main {
  flex: 1;
  min-height: 0;
  display: grid;
  grid-template-columns: 13px 1fr 94px;
  margin-bottom: 3px;
}

.sash { display: flex; }
.outer {
  width: 5px;
  display: flex;
  flex-direction: column;
  justify-content: center;
  gap: 105px;
}
.handle {
  height: 105px;
  display: flex;
  flex-direction: column;
  justify-content: center;
  gap: 1px;
  background: radial-gradient(#8a8784 1px, transparent 1px) 0 0 / 3px 3px;
}
.sash svg { width: 5px; height: 10px; shape-rendering: crispEdges; }
.inner { width: 8px; display: flex; flex-direction: column; }
.rails {
  flex: 1;
  background: linear-gradient(90deg, #d3d0c8 1px, #6ea0dc 1px 2px, #d3d0c8 2px 4px, #6ea0dc 4px 5px, #d3d0c8 5px 7px, #6ea0dc 7px);
}
.pull {
  height: 105px;
  padding-left: 2px;
  display: flex;
  flex-direction: column;
  justify-content: space-between;
  background: repeating-linear-gradient(#4058b8 0 1px, transparent 1px 3px) 3px 10px / 2px 84px no-repeat;
}

.view {
  position: relative;
  min-width: 0;
  overflow: hidden;
  background: linear-gradient(#00619f, #003d70 45%, #000f30);
}
.model { width: 100%; height: 100%; shape-rendering: crispEdges; }

/* Floating model tree window */
.tree-window {
  position: absolute;
  left: 3px;
  top: 86px;
  bottom: 1px;
  width: 176px;
  display: flex;
  flex-direction: column;
  padding: 0 4px 4px;
  border-radius: 8px 8px 0 0;
  background: linear-gradient(90deg, #5a98dc, #8cc0f0 3px, #8cc0f0 173px, #4a88d0);
  color: #000;
}
.tree-title {
  display: flex;
  align-items: center;
  gap: 2px;
  height: 29px;
  flex: none;
  margin: 0 -4px;
  padding: 2px 5px 0 5px;
  border: 1px solid #76aae4;
  border-bottom: 0;
  border-radius: 8px 8px 0 0;
  background: linear-gradient(#6d9cd6, #4a7cc2 25%, #5c94d8 65%, #84bcee);
}
.tree-title h2 {
  flex: 1;
  margin: 0 0 0 3px;
  font: bold 14px/20px var(--cjk);
  color: #fff;
}
.tree-body {
  flex: 1;
  min-height: 0;
  display: flex;
  flex-direction: column;
  background: #fff;
  border-bottom: 1px solid #8a8a90;
}
.tree-body .menubar { padding-left: 6px; }
.tree-tools { display: flex; height: 28px; flex: none; background: var(--face); }
.tree-tools .tb { flex: 0 1 28px; }
.filter {
  height: 17px;
  flex: none;
  margin: 0 0 3px;
  border: 1px solid #d4d4d4;
  border-width: 1px 1px 1px 0;
  background: #fff;
  font: 12px/14px var(--cjk);
}
.root, .nodes li {
  display: flex;
  align-items: center;
  height: 18px;
  line-height: 18px;
  white-space: pre;
}
.root { gap: 4px; padding-left: 4px; flex: none; }
.root svg { width: 13px; height: 13px; shape-rendering: crispEdges; }
.nodes { padding-left: 11px; }
.nodes li { position: relative; }
.nodes li::before {
  content: "";
  width: 9px;
  height: 18px;
  flex: none;
  background:
    repeating-linear-gradient(#999 0 1px, transparent 1px 2px) 0 0 / 1px 18px no-repeat,
    repeating-linear-gradient(90deg, #999 0 1px, transparent 1px 2px) 0 9px / 12px 1px no-repeat;
}
.nodes li:last-child::before {
  background-size: 1px 9px, 12px 1px;
}
.nodes svg { width: 21px; height: 21px; flex: none; shape-rendering: crispEdges; }
.expand {
  position: absolute;
  left: -4px;
  top: 5px;
  width: 9px;
  height: 9px;
  border: 1px solid #7a98b8;
  background:
    linear-gradient(#000, #000) center / 5px 1px no-repeat,
    linear-gradient(#000, #000) center / 1px 5px no-repeat,
    #f4f2ea;
}

/* Feature palette */
.features {
  display: grid;
  grid-template-columns: 41px 28px 28px;
  overflow: hidden;
}
.fcol { display: flex; flex-direction: column; }
.hgrip {
  height: 11px;
  flex: none;
  margin: 0 2px;
  background: repeating-linear-gradient(90deg, #f4f2ee 0 1px, #aaa7a0 1px 2px, transparent 2px 3px) 0 5px / 100% 2px no-repeat;
}
.pair { display: flex; }
.tb + .hgrip { height: 13px; }

/* Message area */
.messages {
  display: flex;
  flex: none;
  height: 80px;
  background: #d6d5da;
}
.messages ul { flex: 1; padding: 9px 0 0 3px; }
.messages li {
  display: flex;
  align-items: center;
  gap: 5px;
}
.messages li::before {
  content: "";
  width: 5px;
  height: 5px;
  border-radius: 2px;
  background: #00f;
}
.scroll {
  width: 14px;
  display: flex;
  flex-direction: column;
  background: linear-gradient(90deg, #e8eefc, #fafcff);
}
.scroll button {
  height: 17px;
  flex: none;
  border: 1px solid #7c98bc;
  border-radius: 2px;
  background: linear-gradient(#fff, #bcd0ee);
}
.scroll button.down { height: 12px; overflow: hidden; }
.scroll svg { width: 12px; height: 15px; }
.track { flex: 1; }
.thumb {
  height: 10px;
  border: 1px solid #7c98bc;
  border-radius: 2px;
  background: repeating-linear-gradient(#8098bc 0 1px, #e4eefc 1px 3px) 3px 1px / 6px 7px no-repeat #dce8fa;
}
```
